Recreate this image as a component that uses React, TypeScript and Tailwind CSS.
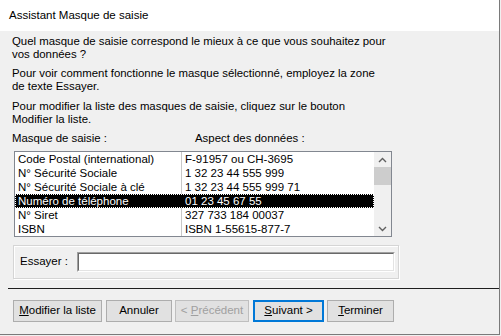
import React from "react";

const rows = [
	["Code Postal (international)", "F-91957 ou CH-3695"],
	["N° Sécurité Sociale", "1 32 23 44 555 999"],
	["N° Sécurité Sociale à clé", "1 32 23 44 555 999 71"],
	["Numéro de téléphone", "01 23 45 67 55"],
	["N° Siret", "327 733 184 00037"],
	["ISBN", "ISBN 1-55615-877-7"],
];

const selected = 3;

function Btn({
	w,
	children,
	disabled,
	primary,
}: {
	w: string;
	children: React.ReactNode;
	disabled?: boolean;
	primary?: boolean;
}) {
	const base = "h-[22px] flex items-center justify-center bg-[#e1e1e1] shrink-0";
	const border = primary
		? "border-2 border-[#0078d7]"
		: disabled
			? "border border-[#bfbfbf] text-[#a0a0a0]"
			: "border border-[#adadad]";
	return <div className={`${base} ${border} ${w}`}>{children}</div>;
}

export default function App() {
	return (
		<div
			className="w-[501px] h-[336px] bg-[#f0f0f0] text-black overflow-hidden"
			style={{ fontFamily: '"Liberation Sans", Arial, sans-serif' }}
		>
			<div className="w-[500px] h-[335px] border-r border-b border-[#7a7a7a] flex flex-col">
				<div className="h-[31px] bg-white flex items-center pl-[9px] text-[11.5px] shrink-0">
					Assistant Masque de saisie
				</div>

				<div className="pl-[12px] text-[11.4px] leading-[13px]">
					<p className="mt-[4px]">
						Quel masque de saisie correspond le mieux à ce que vous souhaitez pour
						<br />
						vos données ?
					</p>
					<p className="mt-[6px]">
						Pour voir comment fonctionne le masque sélectionné, employez la zone
						<br />
						de texte Essayer.
					</p>
					<p className="mt-[7px]">
						Pour modifier la liste des masques de saisie, cliquez sur le bouton
						<br />
						Modifier la liste.
					</p>
					<div className="mt-[6px] flex">
						<span className="w-[183px]">Masque de saisie :</span>
						<span>Aspect des données :</span>
					</div>
				</div>

				<div className="ml-[14px] mt-[6px] w-[378px] h-[86px] border border-[#828790] bg-white flex text-[11.5px] leading-[14px]">
					<div className="flex-1 relative">
						<div className="absolute left-[166px] top-0 bottom-0 w-px bg-[#c8c8c8]" />
						{rows.map(([a, b], i) => (
							<div
								key={a}
								className={`h-[14px] flex relative ${
									i === selected
										? "bg-black text-white outline outline-1 outline-dotted outline-white -outline-offset-1"
										: ""
								}`}
							>
								<span className="w-[170px] pl-[3px] whitespace-nowrap">{a}</span>
								<span className="whitespace-nowrap">{b}</span>
							</div>
						))}
					</div>
					<div className="w-[17px] bg-[#f0f0f0] flex flex-col items-center">
						<div className="h-[15px] flex items-center justify-center">
							<svg width="9" height="6" viewBox="0 0 9 6">
								<path d="M1 5 L4.5 1.5 L8 5" fill="none" stroke="#606060" strokeWidth="1.4" />
							</svg>
						</div>
						<div className="w-[17px] h-[18px] bg-[#cdcdcd]" />
						<div className="flex-1" />
						<div className="h-[15px] flex items-center justify-center">
							<svg width="9" height="6" viewBox="0 0 9 6">
								<path d="M1 1 L4.5 4.5 L8 1" fill="none" stroke="#606060" strokeWidth="1.4" />
							</svg>
						</div>
					</div>
				</div>

				<div className="ml-[13px] mt-[8px] w-[386px] h-[34px] border border-[#d5d5d5] shadow-[inset_1px_1px_0_#ffffff,1px_1px_0_#ffffff] flex items-center text-[11.5px]">
					<span className="pl-[6px] w-[63px]">Essayer :</span>
					<div className="w-[318px] h-[20px] border-t border-l border-[#a0a0a0] border-r border-b border-r-white border-b-white">
						<div className="w-full h-full bg-white border-t border-l border-[#696969] border-r border-b border-r-[#e3e3e3] border-b-[#e3e3e3]" />
					</div>
				</div>

				<div className="ml-[8px] mt-[9px] h-px bg-[#1e1e1e]" />

				<div className="mt-[11px] ml-[13px] flex text-[11.5px] gap-[3px]">
					<Btn w="w-[89px]">
						<span>
							<u>M</u>odifier la liste
						</span>
					</Btn>
					<Btn w="w-[66px] ml-[1px]">Annuler</Btn>
					<Btn w="w-[74px]" disabled>
						<span>
							&lt; <u>P</u>récédent
						</span>
					</Btn>
					<Btn w="w-[71px] ml-[1px]" primary>
						<span>
							<u>S</u>uivant &gt;
						</span>
					</Btn>
					<Btn w="w-[67px]">
						<span>
							<u>T</u>erminer
						</span>
					</Btn>
				</div>
			</div>
		</div>
	);
}
